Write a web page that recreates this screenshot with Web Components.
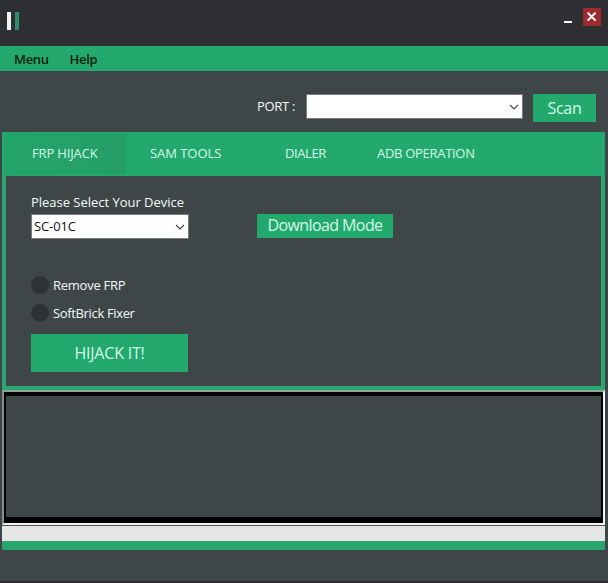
<!DOCTYPE html>
<html lang="en">
<head>
<meta charset="utf-8">
<title>FRP Hijack</title>
<style>
	html, body {
		margin: 0;
		height: 100%;
		overflow: hidden;
	}
	body {
		--color-green: #23a96e;
		--color-panel: #3f4648;
		--color-dark: #2e2f32;
		font: 13px/18px "Open Sans", "Noto Sans", sans-serif;
		color: #f4f8f8;
	}
</style>
</head>
<body>
<app-window>
	<title-bar slot="title"></title-bar>
	<menu-bar slot="menu">
		<menu-entry style="--gap: 21px; --spacing: -0.35px">Menu</menu-entry>
		<menu-entry style="--spacing: -0.35px">Help</menu-entry>
	</menu-bar>
	<port-row>
		<span slot="label">PORT :</span>
		<combo-box style="width: 217px"></combo-box>
		<flat-button style="width: 63px; height: 28px; --size: 16px; --spacing: -0.3px">Scan</flat-button>
	</port-row>
	<tab-panel>
		<tab-item slot="tab" active style="width: 120px; --inset: 26px; --spacing: -0.15px">FRP HIJACK</tab-item>
		<tab-item slot="tab" style="width: 120px; --inset: 24px; --spacing: -0.05px">SAM TOOLS</tab-item>
		<tab-item slot="tab" style="width: 120px; --inset: 39px; --spacing: -0.4px">DIALER</tab-item>
		<tab-item slot="tab" style="width: 120px; --inset: 11px; --spacing: -0.3px">ADB OPERATION</tab-item>
		<hijack-form></hijack-form>
	</tab-panel>
	<log-console></log-console>
	<progress-strip></progress-strip>
</app-window>

<script>
class BaseElement extends HTMLElement {
	constructor() {
		super()
		this.attachShadow({
			mode: 'open'
		})
		this.shadowRoot.innerHTML = this.constructor.markup
	}
}

class AppWindow extends BaseElement {
	static markup = `
		<style>
			:host {
				display: flex;
				flex-direction: column;
				box-sizing: border-box;
				width: 608px;
				height: 583px;
				background: var(--color-panel);
				border-bottom: 2px solid #2c2e33;
			}
		</style>
		<slot name="title"></slot>
		<slot name="menu"></slot>
		<slot></slot>
	`
}

class TitleBar extends BaseElement {
	static markup = `
		<style>
			:host {
				display: flex;
				align-items: flex-start;
				justify-content: space-between;
				box-sizing: border-box;
				height: 46px;
				padding: 8px 7px 0;
				background: var(--color-dark);
			}
			.Logo {
				display: flex;
				gap: 4px;
				margin-top: 4px;
			}
			.Logo i {
				width: 4px;
				height: 18px;
				background: #f4f6f6;
			}
			.Logo i + i {
				background: #2f8f69;
			}
			.Controls {
				display: flex;
				gap: 11px;
			}
			svg {
				display: block;
			}
		</style>
		<div class="Logo"><i></i><i></i></div>
		<div class="Controls">
			<svg width="8" height="18"><path d="M0 14h8" stroke="#fff" stroke-width="2"/></svg>
			<svg width="18" height="18">
				<rect width="18" height="18" fill="#9c2a2e"/>
				<path d="M4.6 4.6l8 8M12.6 4.6l-8 8" stroke="#fff" stroke-width="2"/>
			</svg>
		</div>
	`
}

class MenuBar extends BaseElement {
	static markup = `
		<style>
			:host {
				display: flex;
				align-items: center;
				height: 25px;
				padding-left: 14px;
				background: var(--color-green);
			}
		</style>
		<slot></slot>
	`
}

class MenuEntry extends BaseElement {
	static markup = `
		<style>
			:host {
				display: block;
				margin-right: var(--gap, 0);
				font-weight: 600;
				letter-spacing: var(--spacing, 0);
				color: #082008;
			}
		</style>
		<slot></slot>
	`
}

class PortRow extends BaseElement {
	static markup = `
		<style>
			:host {
				display: flex;
				align-items: flex-start;
				box-sizing: border-box;
				height: 61px;
				padding: 23px 12px 0 257px;
			}
			.Label {
				width: 49px;
				padding-top: 3px;
				letter-spacing: -0.3px;
				white-space: nowrap;
			}
			.Fields {
				display: flex;
				gap: 10px;
			}
		</style>
		<div class="Label"><slot name="label"></slot></div>
		<div class="Fields"><slot></slot></div>
	`
}

class ComboBox extends BaseElement {
	static markup = `
		<style>
			:host {
				display: flex;
				align-items: center;
				justify-content: space-between;
				box-sizing: border-box;
				height: 25px;
				padding: 0 3px 0 2px;
				border: 1px solid #777b7c;
				background: #fff;
				color: #111;
				letter-spacing: var(--spacing, 0);
			}
			span {
				padding-bottom: 2px;
			}
		</style>
		<span><slot></slot></span>
		<svg width="10" height="8"><path d="M1 2l4 4 4-4" fill="none" stroke="#4a4a4a" stroke-width="1.2"/></svg>
	`
}

class FlatButton extends BaseElement {
	static markup = `
		<style>
			:host {
				display: flex;
				align-items: center;
				justify-content: center;
				box-sizing: border-box;
				padding-bottom: var(--lift, 0);
				background: var(--color-green);
				color: #d4f8e6;
				font-size: var(--size, 16px);
				letter-spacing: var(--spacing, 0);
				white-space: nowrap;
			}
		</style>
		<slot></slot>
	`
}

class TabPanel extends BaseElement {
	static markup = `
		<style>
			:host {
				display: flex;
				flex-direction: column;
				box-sizing: border-box;
				height: 258px;
				margin: 0 3px 0 2px;
				padding: 0 4px 4px;
				background: #2ea672;
			}
			.Tabs {
				display: flex;
				height: 42px;
				margin: 0 -4px;
				padding: 2px 4px 0;
				background: var(--color-green);
			}
			.Body {
				flex: 1;
				background: var(--color-panel);
			}
		</style>
		<div class="Tabs"><slot name="tab"></slot></div>
		<div class="Body"><slot></slot></div>
	`
}

class TabItem extends BaseElement {
	static markup = `
		<style>
			:host {
				display: flex;
				align-items: center;
				box-sizing: border-box;
				height: 40px;
				padding: 0 0 2px var(--inset, 0);
				letter-spacing: var(--spacing, 0);
				white-space: nowrap;
				color: #d4f8e6;
			}
			:host([active]) {
				background: linear-gradient(90deg, #23a56b, #24a169 60%, #259d67);
				box-shadow: inset 0 0 3px #249a65;
			}
		</style>
		<slot></slot>
	`
}

class RadioOption extends BaseElement {
	static markup = `
		<style>
			:host {
				display: flex;
				align-items: center;
				gap: 4px;
				height: 18px;
				letter-spacing: var(--spacing, 0);
			}
			i {
				width: 18px;
				height: 18px;
				border-radius: 50%;
				background: #2f3234;
			}
		</style>
		<i></i><span><slot></slot></span>
	`
}

class HijackForm extends BaseElement {
	static markup = `
		<style>
			:host {
				display: block;
				padding: 17px 25px 0;
			}
			.Heading {
				letter-spacing: -0.02px;
			}
			.Row {
				display: flex;
				gap: 68px;
				margin: 3px 0 37px;
			}
			.Options {
				display: flex;
				flex-direction: column;
				gap: 10px;
				margin-bottom: 12px;
			}
		</style>
		<div class="Heading">Please Select Your Device</div>
		<div class="Row">
			<combo-box style="width: 158px; --spacing: -0.1px">SC-01C</combo-box>
			<flat-button style="width: 136px; height: 24px; --spacing: -0.6px; --lift: 2px">Download Mode</flat-button>
		</div>
		<div class="Options">
			<radio-option style="--spacing: -0.25px">Remove FRP</radio-option>
			<radio-option style="--spacing: -0.35px">SoftBrick Fixer</radio-option>
		</div>
		<flat-button style="width: 157px; height: 38px; --spacing: -0.2px">HIJACK IT!</flat-button>
	`
}

class LogConsole extends BaseElement {
	static markup = `
		<style>
			:host {
				display: block;
				box-sizing: border-box;
				height: 135px;
				margin: 0 3px 0 2px;
				border: solid;
				border-width: 2px 2px 2px 2px;
				border-color: #8fa79b #f4f6f6 #f4f6f6 #8a9090;
				padding: 4px 2px 6px 2px;
				background: #000;
			}
			div {
				height: 100%;
				background: var(--color-panel);
			}
		</style>
		<div></div>
	`
}

class ProgressStrip extends BaseElement {
	static markup = `
		<style>
			:host {
				display: block;
				box-sizing: border-box;
				height: 25px;
				margin: 0 3px 0 2px;
				border-top: 1px solid #4d5653;
				border-bottom: 9px solid #28a66d;
				background: #e5e5e5;
			}
		</style>
	`
}

customElements.define('app-window', AppWindow)
customElements.define('title-bar', TitleBar)
customElements.define('menu-bar', MenuBar)
customElements.define('menu-entry', MenuEntry)
customElements.define('port-row', PortRow)
customElements.define('combo-box', ComboBox)
customElements.define('flat-button', FlatButton)
customElements.define('tab-panel', TabPanel)
customElements.define('tab-item', TabItem)
customElements.define('radio-option', RadioOption)
customElements.define('hijack-form', HijackForm)
customElements.define('log-console', LogConsole)
customElements.define('progress-strip', ProgressStrip)
</script>
</body>
</html>
